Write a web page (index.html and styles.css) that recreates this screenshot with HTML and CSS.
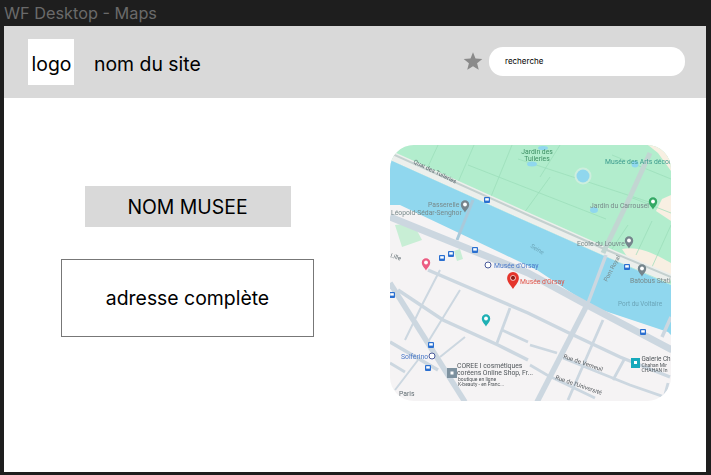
FILE: index.html
```html
<!DOCTYPE html>
<html lang="fr">
<head>
<meta charset="utf-8">
<title>WF Desktop - Maps</title>
<link rel="stylesheet" href="styles.css">
</head>
<body>
<div class="frame-title">WF Desktop - Maps</div>
<div class="frame">
  <header class="site-header">
    <div class="logo">logo</div>
    <div class="site-name">nom du site</div>
    <svg class="star" viewBox="0 0 24 24" aria-hidden="true"><path d="M12 1.500l3 7.400 8.200.6-6.300 5.200 2 7.900L12 18.300 5.100 22.600l2-7.900L.8 9.500 9 8.900z"/></svg>
    <div class="search">recherche</div>
  </header>
  <main class="content">
    <section class="info">
      <h1 class="museum">NOM MUSEE</h1>
      <p class="address">adresse complète</p>
    </section>
    <svg class="map" viewBox="0 0 281 256" role="img" aria-label="Carte du quartier du musée d'Orsay">
      <defs>
        <g id="bus"><rect x="-3" y="-3" width="6" height="6" rx="1" class="i-blue"/><rect x="-1.800" y="-1.800" width="3.600" height="2.400" class="i-white"/></g>
        <g id="pin"><path d="M0 6.500C-1 4.200-4.200 2-4.200-1.500a4.200 4.200 0 0 1 8.400 0C4.200 2 1 4.200 0 6.500z"/><circle cy="-1.500" r="1.900" class="i-white"/></g>
      </defs>
      <rect width="281" height="256" class="land"/>
      <path class="park" d="M0 0H281V140L212 110 140 78 0 15z"/>
      <path class="sand" d="M258 0H281V26L268 8z"/>
      <path class="sand" d="M281 50V76L266 66 272 54z"/>
      <path class="sand" d="M232 104C250 100 270 112 281 118V134L240 116z"/>
      <g class="park-line">
        <path d="M48 0L36 26M84 0L66 42M122 0L100 54M160 32L134 68M128 14L262 58M78 20L216 74M60 36L190 92M170 0L150 32M222 10L281 34M240 52L281 68M238 80L222 104M262 76L246 110M281 80L262 122"/>
      </g>
      <path class="band" d="M0 10L140 73 212 105 281 134"/>
      <path class="band-line" d="M0 8L140 71 212 103 281 132"/>
      <path class="water" d="M0 15L140 78 212 110 281 140V190L278 187 203 162 147 125 10 60H0z"/>
      <circle cx="193" cy="31" r="8.500" class="pond-edge"/>
      <circle cx="193" cy="31" r="6.500" class="water"/>
      <circle cx="245" cy="19" r="3.500" class="water"/>
      <ellipse cx="142" cy="19" rx="5" ry="2.500" class="water"/>
      <ellipse cx="204" cy="65" rx="4" ry="3" class="water"/>
      <ellipse cx="153" cy="3" rx="5" ry="2" class="water"/>
      <path class="green-block" d="M5 80L23 78 32 95 12 102z"/>
      <path class="green-block" d="M64 106L70 104 73 114 67 116z"/>
      <path class="bridge-faint" d="M83 55L67 95"/>
      <path class="bridge" d="M216 110L198 158"/>
      <path class="bridge" d="M281 172L272 192"/>
      <path class="park-road" d="M260 8L240 52 213 108"/>
      <g class="road">
        <path class="r7" d="M0 72L138 128 197 160 282 205"/>
        <path class="r6" d="M0 138L75 257"/>
        <path class="r6" d="M197 160L147 257"/>
        <path class="r4" d="M8 145L53 175 108 200 138 215"/>
        <path class="r4" d="M38 125L138 168 177 187 230 212 280 232"/>
        <path class="r4" d="M0 197L48 225"/>
        <path class="r3" d="M120 163L107 198M112 185L138 197M213 175L178 255M140 200L167 208M140 220L157 230 205 253M173 213L240 240 283 255M235 213L223 235M278 238L273 257M0 218L15 227"/>
        <path class="r2" d="M50 125L33 158 15 195M70 145L38 197M75 192L50 212M28 215L5 245"/>
      </g>
      <text class="t-grey t6" transform="translate(23 18) rotate(26)">Quai des Tuileries</text>
      <text class="t-green t7" x="147" y="9" text-anchor="middle">Jardin des</text>
      <text class="t-green t7" x="147" y="16" text-anchor="middle">Tuileries</text>
      <text class="t-teal t7" x="215" y="19">Musée des Arts décor</text>
      <text class="t-soft t7" x="200" y="63">Jardin du Carrousel</text>
      <text class="t-soft t7" x="187" y="101">Ecole du Louvre</text>
      <text class="t-soft t7" x="38" y="62">Passerelle</text>
      <text class="t-soft t7" x="1" y="69.500">Léopold-Sédar-Senghor</text>
      <text class="t-water t6" transform="translate(140 102) rotate(32)">Seine</text>
      <text class="t-soft t6" transform="translate(217 137) rotate(-62)">Pont Royal</text>
      <text class="t-soft t7" x="240" y="138">Batobus Stati</text>
      <text class="t-water t6b" x="228" y="161">Port du Voltaire</text>
      <text class="t-blue t7" x="104" y="123">Musée d'Orsay</text>
      <text class="t-red t7" x="130" y="139">Musée d'Orsay</text>
      <text class="t-grey t6" transform="translate(0 112) rotate(20)">Lille</text>
      <text class="t-blue t7" x="11" y="214">Solférino</text>
      <text class="t-dark t7" x="67" y="223">COREE I cosmétiques</text>
      <text class="t-dark t7" x="67" y="230">coréens Online Shop, Fr...</text>
      <text class="t-dark t5" x="68" y="236">boutique en ligne</text>
      <text class="t-dark t5" x="68" y="241">K-beauty - en Franc...</text>
      <text class="t-grey t7" x="9" y="251">Paris</text>
      <text class="t-dark t6" transform="translate(173 213) rotate(19)">Rue de Verneuil</text>
      <text class="t-dark t6" transform="translate(165 234) rotate(19)">Rue de l'Université</text>
      <text class="t-dark t6b" x="251.500" y="215.500">Galerie Ch</text>
      <text class="t-dark t5" x="251.500" y="221.500">Chahan Mir</text>
      <text class="t-dark t5" x="251.500" y="226.500">CHAHAN In</text>
      <use href="#bus" x="97" y="55"/>
      <use href="#bus" x="237" y="122"/>
      <use href="#bus" x="61" y="109"/>
      <use href="#bus" x="52" y="113"/>
      <use href="#bus" x="85" y="105"/>
      <use href="#bus" x="2" y="150"/>
      <use href="#bus" x="41" y="200"/>
      <use href="#bus" x="38" y="223"/>
      <use href="#bus" x="253" y="187"/>
      <use href="#pin" x="75" y="61" class="i-grey"/>
      <use href="#pin" x="239" y="97" class="i-grey"/>
      <use href="#pin" x="252" y="125" class="i-grey"/>
      <use href="#pin" x="263" y="58" class="i-green"/>
      <use href="#pin" x="36" y="119" class="i-pink"/>
      <use href="#pin" x="96" y="175" class="i-teal"/>
      <g transform="translate(123 135) scale(1.400)"><use href="#pin" class="i-red"/><circle cy="-1.500" r="1.500" class="i-darkred"/></g>
      <circle cx="98" cy="120" r="3" class="i-white metro"/>
      <circle cx="42" cy="211" r="3" class="i-white metro"/>
      <rect x="57" y="223" width="10" height="10" class="i-slate"/>
      <rect x="60.500" y="226.500" width="3" height="3" class="i-white"/>
      <rect x="241" y="213" width="9" height="10" class="i-cyan"/>
      <rect x="244" y="216" width="3" height="3" class="i-white"/>
    </svg>
  </main>
</div>
</body>
</html>
```
FILE: styles.css
```css
* { box-sizing: border-box; }
html, body { margin: 0; height: 475px; overflow: hidden; }
body {
  background: #1e1e1e;
  font-family: Inter, "Liberation Sans", sans-serif;
  color: #000;
  display: flex;
  flex-direction: column;
}
.frame-title {
  height: 26px;
  padding: 4px 0 0 4px;
  font-size: 16.3px;
  line-height: 19px;
  color: #6a6a6a;
  white-space: nowrap;
}
.frame {
  width: 702px;
  height: 446px;
  margin-left: 4px;
  background: #fff;
  display: flex;
  flex-direction: column;
}
.site-header {
  height: 72px;
  background: #d9d9d9;
  display: flex;
  align-items: center;
  padding: 0 21px 0 24px;
}
.logo {
  width: 46px;
  height: 46px;
  background: #fff;
  font-size: 19.4px;
  padding: 4px 0 0 1px;
  display: flex;
  align-items: center;
  justify-content: center;
}
.site-name {
  margin-left: 20px;
  padding-top: 4px;
  font-size: 19.4px;
  flex: 1;
}
.star { width: 20px; height: 20px; fill: #8a8a8a; margin: 0 6px 2px 0; }
.search {
  width: 196px;
  height: 29px;
  margin-bottom: 2px;
  background: #fff;
  border-radius: 14px;
  font-size: 8px;
  display: flex;
  align-items: center;
  padding-left: 16px;
}
.content { display: flex; align-items: flex-start; padding: 47px 0 0 57px; }
.info { width: 253px; display: flex; flex-direction: column; align-items: center; padding-top: 41px; }
.museum {
  margin: 0;
  width: 206px;
  height: 41px;
  background: #d9d9d9;
  font-size: 19.4px;
  font-weight: 400;
  display: flex;
  align-items: center;
  justify-content: center;
}
.address {
  margin: 32px 0 0;
  width: 253px;
  height: 78px;
  border: 1px solid #777;
  font-size: 19.4px;
  display: flex;
  align-items: center;
  justify-content: center;
}
.map {
  width: 281px;
  height: 256px;
  margin-left: 76px;
  border-radius: 24px;
  font-family: Roboto, "Liberation Sans", sans-serif;
  flex: none;
  filter: blur(.35px);
}
.land { fill: #f5f3f4; }
.park { fill: #b2edcd; }
.sand { fill: #f8efe2; }
.water { fill: #90d7ee; }
.pond-edge { fill: #cdeedd; }
.green-block { fill: #c8eed5; }
.park-line path { fill: none; stroke: #99dcb7; stroke-width: .7; }
.band { fill: none; stroke: #ecefec; stroke-width: 9; }
.band-line { fill: none; stroke: #c4d0cf; stroke-width: 2; }
.road path { fill: none; stroke: #ccd7e0; }
.bridge { fill: none; stroke: #ccd7e0; stroke-width: 3.500; }
.bridge-faint { fill: none; stroke: #a9c9da; stroke-width: 3; }
.park-road { fill: none; stroke: #c2d6d2; stroke-width: 5; }
.r7 { stroke-width: 7; }
.r6 { stroke-width: 5.500; }
.r4 { stroke-width: 3.500; }
.r3 { stroke-width: 2.800; }
.r2 { stroke-width: 2; }
.t5 { font-size: 5px; }
.t6 { font-size: 6px; }
.t6b { font-size: 6.400px; }
.t7 { font-size: 6.800px; }
.t-grey { fill: #5e6a70; }
.t-soft { fill: #78898a; }
.t-green { fill: #3c8f63; }
.t-teal { fill: #3a9a8c; }
.t-water { fill: #6ba5b8; }
.t-blue { fill: #4a78c8; }
.t-red { fill: #e0554a; }
.t-dark { fill: #4f5559; }
.i-white { fill: #fff; }
.i-blue { fill: #2a6fd0; }
.i-grey { fill: #75858c; }
.i-green { fill: #34a864; }
.i-pink { fill: #ec5c82; }
.i-teal { fill: #1fb0b4; }
.i-red { fill: #e5352c; }
.i-darkred { fill: #8e1c16; }
.i-slate { fill: #7d919f; }
.i-cyan { fill: #16a9bb; }
.metro { stroke: #4a5a9a; stroke-width: 1; }
```
